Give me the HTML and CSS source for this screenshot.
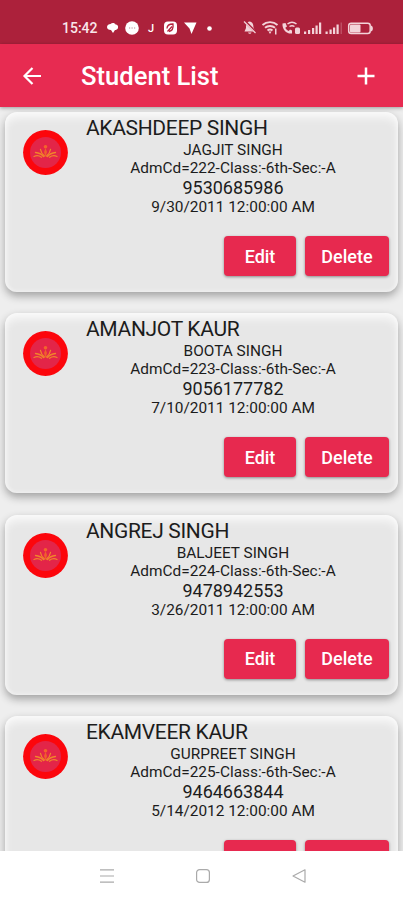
FILE: index.html
```
<!DOCTYPE html>
<html lang="en">
<head>
  <meta charset="utf-8">
  <meta name="viewport" content="width=device-width, initial-scale=1">
  <title>Student List</title>
  <link rel="stylesheet" href="styles.css">
</head>
<body>
  <!-- shared school logo -->
  <svg class="sprite" width="0" height="0">
    <symbol id="school-logo" viewBox="0 0 45 45">
      <circle cx="22.5" cy="22.5" r="22.4" fill="#fc060c"/>
      <circle cx="22.5" cy="22.5" r="15.5" fill="#e32548"/>
      <g fill="none" stroke="#f0842c" stroke-width="1.3" stroke-linecap="round">
        <path d="M17.500 19.500c.5 3 2 5 4 6.500M27.500 19.500c-.5 3-2 5-4 6.500"/>
        <path d="M12.500 22.500c3 .3 6 1.500 8 4M32.500 22.500c-3 .3-6 1.500-8 4"/>
        <path d="M11 26.500c2-1 5-1 7.500.7M34 26.500c-2-1-5-1-7.500.7"/>
      </g>
      <path d="M22.500 18l1.500 4-1.500 5-1.500-5z" fill="#f0602c"/>
      <circle cx="22.500" cy="16.800" r="1.800" fill="#f3642b"/>
    </symbol>
  </svg>

  <div class="status-bar">
    <span class="time">15:42</span>
    <svg class="notifications" width="108" height="18" viewBox="0 0 108 18" fill="#fff">
      <path d="M1 8c0-2 2-3 3.500-3C6 3.500 9 4 9.500 5.500c2 0 3 1.500 2.500 3.500-.5 1.500-2 2-3 2L7 14l-2-3C2.500 11 1 10 1 8z"/>
      <circle cx="26" cy="9" r="6.800"/>
      <path d="M23 9h1.200M25.500 9h1.200M28 9h1.200" stroke="#b98b96" stroke-width="1.200"/>
      <text class="status-letter" x="42" y="13">J</text>
      <rect x="58" y="2.500" width="13" height="13" rx="4"/>
      <path d="M61 9.500c0-3 2-4.500 6-4.500.5 4-1 7-4 7.500M61.500 12.500l4.500-5" fill="none" stroke="#b5223c" stroke-width="1.300"/>
      <path d="M78 3.500h12.500L85.500 15l-2-5.500z"/>
      <circle cx="103.500" cy="9.500" r="2.300"/>
    </svg>
    <svg class="system-icons" width="132" height="18" viewBox="0 0 132 18" fill="#f3d3d9">
      <path d="M6.500 2.500c3.200.5 4 3 4 6l1.700 4H1.500L3 9c0-3.500.7-6 3.500-6.500zM5 13.500h3.500c-.6 1.700-2.900 1.700-3.500 0z"/>
      <path d="M1.500 2l11.500 11.500" stroke="#ac213b" stroke-width="2.500"/>
      <path d="M1 2.500L12.500 14" stroke="#f3d3d9" stroke-width="1.200"/>
      <g fill="none" stroke="#f3d3d9" stroke-width="1.900">
        <path d="M19.500 6c4.200-3.800 10.800-3.800 15 0M22 8.800c2.800-2.500 7.200-2.500 10 0M24.500 11.500c1.400-1.200 3.600-1.200 5 0"/>
      </g>
      <path d="M25.500 12.500h3L27 15zM32 9.500h1.500v6H32z"/>
      <path d="M39.500 4.500l3-.5 1.500 3.500-1.700 1.200c.8 1.800 2 2.700 3.500 3.300l1.200-1.500 2 1v3c-5 .8-10-3.500-9.500-10z"/>
      <path d="M44.500 5c2.700-2.200 6.300-2.200 9 0M46.500 7.500c1.500-1 3.500-1 5 0" fill="none" stroke="#f3d3d9" stroke-width="1.500"/>
      <rect x="52" y="8.500" width="5" height="6.500" rx="1.500"/>
      <path d="M61 12.500h2.200V15H61zM65 11h2.200v4H65zM69 9h2.200v6H69zM72.500 6.500h2.200V15h-2.200zM76 3.500h2.200V15H76z"/>
      <path d="M82.500 12.500h2.200V15h-2.200zM86.500 10.500h2.200V15h-2.200zM90 8.500h2.200V15H90zM93.500 5.500h2.200V15h-2.200z"/>
      <path d="M97.500 3.500H99V15h-1.500z" opacity=".25"/>
      <rect x="105.700" y="4.200" width="21.500" height="10.300" rx="2.500" fill="none" stroke="#f3d3d9" stroke-width="1.500"/>
      <rect x="107" y="5.500" width="10.500" height="8" rx="1"/>
      <path d="M128 6.500c2.500.5 2.500 5.500 0 6z"/>
    </svg>
  </div>

  <header class="app-bar">
    <svg class="back" width="20" height="20" viewBox="0 0 20 20" fill="none" stroke="#fff" stroke-width="2.200">
      <path d="M19 10H3M10.500 2L2.500 10l8 8"/>
    </svg>
    <h1>Student List</h1>
    <svg class="add" width="18" height="18" viewBox="0 0 18 18" fill="none" stroke="#fff" stroke-width="2.500">
      <path d="M9 .5v17M.5 9h17"/>
    </svg>
  </header>

  <main class="list">
    <div class="card">
      <svg class="avatar"><use href="#school-logo"/></svg>
      <div class="info">
        <h2>AKASHDEEP SINGH</h2>
        <p class="father">JAGJIT SINGH</p>
        <p class="class">AdmCd=222-Class:-6th-Sec:-A</p>
        <p class="phone">9530685986</p>
        <p class="date">9/30/2011 12:00:00 AM</p>
      </div>
      <div class="actions">
        <button class="edit">Edit</button>
        <button class="delete">Delete</button>
      </div>
    </div>

    <div class="card">
      <svg class="avatar"><use href="#school-logo"/></svg>
      <div class="info">
        <h2>AMANJOT KAUR</h2>
        <p class="father">BOOTA SINGH</p>
        <p class="class">AdmCd=223-Class:-6th-Sec:-A</p>
        <p class="phone">9056177782</p>
        <p class="date">7/10/2011 12:00:00 AM</p>
      </div>
      <div class="actions">
        <button class="edit">Edit</button>
        <button class="delete">Delete</button>
      </div>
    </div>

    <div class="card">
      <svg class="avatar"><use href="#school-logo"/></svg>
      <div class="info">
        <h2>ANGREJ SINGH</h2>
        <p class="father">BALJEET SINGH</p>
        <p class="class">AdmCd=224-Class:-6th-Sec:-A</p>
        <p class="phone">9478942553</p>
        <p class="date">3/26/2011 12:00:00 AM</p>
      </div>
      <div class="actions">
        <button class="edit">Edit</button>
        <button class="delete">Delete</button>
      </div>
    </div>

    <div class="card">
      <svg class="avatar"><use href="#school-logo"/></svg>
      <div class="info">
        <h2>EKAMVEER KAUR</h2>
        <p class="father">GURPREET SINGH</p>
        <p class="class">AdmCd=225-Class:-6th-Sec:-A</p>
        <p class="phone">9464663844</p>
        <p class="date">5/14/2012 12:00:00 AM</p>
      </div>
      <div class="actions">
        <button class="edit">Edit</button>
        <button class="delete">Delete</button>
      </div>
    </div>
  </main>

  <nav class="nav-bar">
    <svg width="14" height="14" viewBox="0 0 14 14" fill="none" stroke="#aaa" stroke-width="1.200">
      <path d="M0 .8h14M0 7h14M0 13.200h14"/>
    </svg>
    <svg width="14" height="14" viewBox="0 0 14 14" fill="none" stroke="#aaa" stroke-width="1.200">
      <rect x=".6" y=".6" width="12.800" height="12.800" rx="3"/>
    </svg>
    <svg width="14" height="14" viewBox="0 0 14 14" fill="none" stroke="#aaa" stroke-width="1.200" stroke-linejoin="round">
      <path d="M13 .8v12.400L1 7z"/>
    </svg>
  </nav>
</body>
</html>
```
FILE: styles.css
```
* {
  box-sizing: border-box;
}

body {
  margin: 0;
  height: 900px;
  display: flex;
  flex-direction: column;
  overflow: hidden;
  background: #eee;
  font-family: Roboto, sans-serif;
  color: #1c1c1c;
}

h1, h2, p {
  margin: 0;
  font-weight: 400;
}

.sprite {
  display: none;
}

.status-bar {
  flex: none;
  height: 44px;
  padding: 11px 28px 0 62px;
  display: flex;
  align-items: center;
  background: #ac213b;
}

.time {
  width: 44px;
  font-size: 14px;
  font-weight: 500;
  color: #f9e6ea;
}

.status-letter {
  font-size: 11px;
  font-weight: 500;
}

.system-icons {
  margin-left: auto;
}

.app-bar {
  flex: none;
  height: 63px;
  padding: 0 28px 0 22px;
  display: flex;
  align-items: center;
  background: #e72b51;
  box-shadow: 0 1px 4px rgba(0, 0, 0, 0.35);
  z-index: 1;
}

.app-bar h1 {
  margin-left: 39px;
  font-size: 25.6px;
  font-weight: 500;
  color: #fff;
}

.add {
  margin-left: auto;
}

.list {
  flex: 1;
  min-height: 0;
  padding: 5px 5px 0;
  overflow: hidden;
}

.card {
  height: 180px;
  margin-bottom: 21.4px;
  padding: 4px 9px 0 18px;
  display: grid;
  grid-template-columns: 63px 1fr;
  grid-template-rows: 120px 40px;
  border-radius: 12px;
  background: #e7e7e7;
  box-shadow: 0 4px 8px rgba(0, 0, 0, 0.32), inset 0 6px 9px rgba(255, 255, 255, 0.7), inset 0 0 5px rgba(255, 255, 255, 0.6);
}

.avatar {
  width: 45px;
  height: 45px;
  margin-top: 14px;
}

.info {
  padding-right: 9px;
  text-align: center;
}

.info h2 {
  font-size: 21px;
  line-height: 25px;
  letter-spacing: -0.33px;
  text-align: left;
}

.father,
.class,
.date {
  font-size: 15.4px;
  line-height: 18px;
}

.phone {
  font-size: 18px;
  line-height: 21px;
}

.actions {
  grid-column: 1 / 3;
  display: flex;
  justify-content: flex-end;
  gap: 9px;
}

button {
  height: 40px;
  padding: 0;
  border: 0;
  border-radius: 4px;
  background: #e7294f;
  box-shadow: 0 1px 3px rgba(0, 0, 0, 0.4);
  font-family: inherit;
  font-size: 18px;
  font-weight: 500;
  color: #fff;
}

.edit {
  width: 72px;
}

.delete {
  width: 84px;
}

.nav-bar {
  flex: none;
  height: 49px;
  padding-left: 2px;
  display: flex;
  justify-content: center;
  align-items: center;
  gap: 82px;
  background: #fff;
  z-index: 1;
}
```
